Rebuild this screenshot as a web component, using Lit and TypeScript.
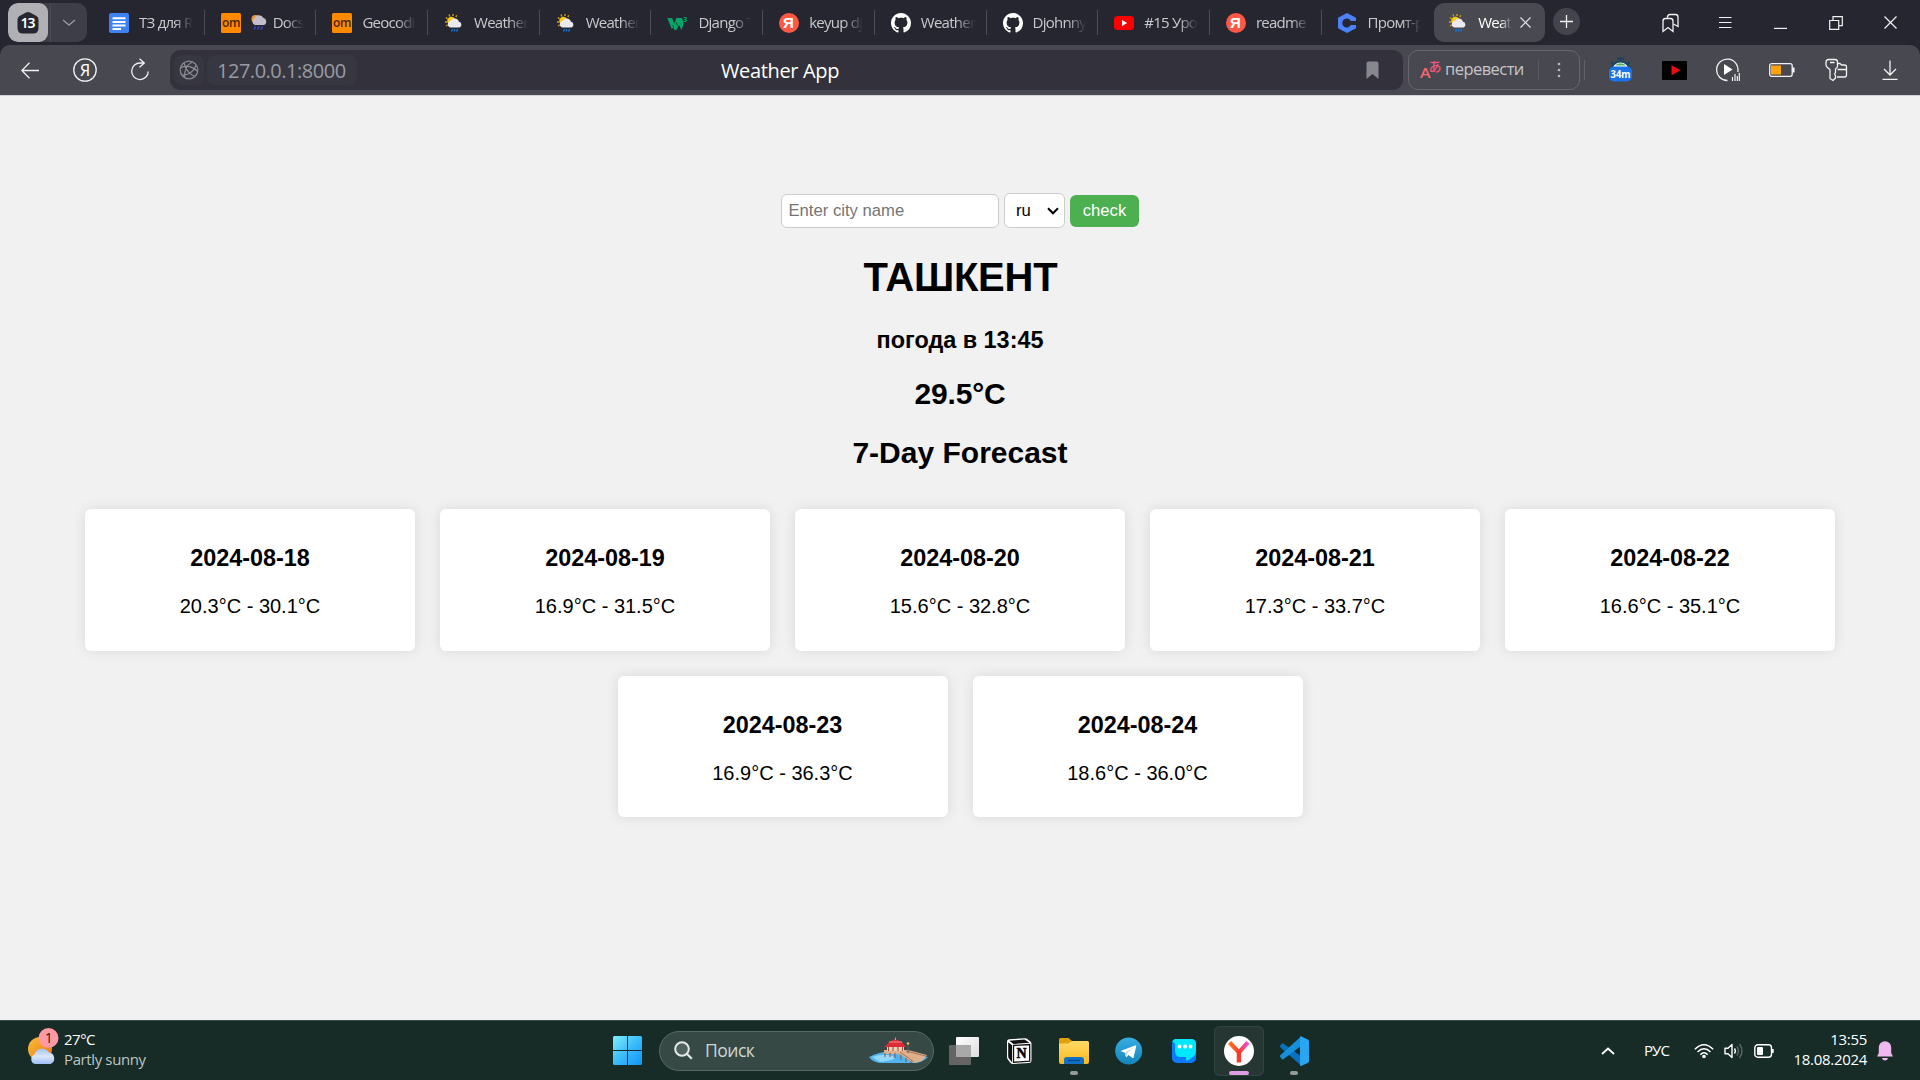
import { LitElement, html, css, svg, nothing } from "lit";
import { customElement } from "lit/decorators.js";

const icon = (w: number, h: number, body: unknown, cls = "") =>
  html`<svg class=${cls} width=${w} height=${h} viewBox="0 0 ${w} ${h}" fill="none">${body}</svg>`;

const GH =
  "M8 0C3.58 0 0 3.58 0 8c0 3.54 2.29 6.53 5.47 7.59.4.07.55-.17.55-.38 0-.19-.01-.82-.01-1.49-2.01.37-2.53-.49-2.69-.94-.09-.23-.48-.94-.82-1.13-.28-.15-.68-.52-.01-.53.63-.01 1.08.58 1.23.82.72 1.21 1.87.87 2.33.66.07-.52.28-.87.51-1.07-1.78-.2-3.64-.89-3.64-3.95 0-.87.31-1.59.82-2.15-.08-.2-.36-1.02.08-2.12 0 0 .67-.21 2.2.82.64-.18 1.32-.27 2-.27s1.36.09 2 .27c1.53-1.04 2.2-.82 2.2-.82.44 1.1.16 1.92.08 2.12.51.56.82 1.27.82 2.15 0 3.07-1.87 3.75-3.65 3.95.29.25.54.73.54 1.48 0 1.07-.01 1.93-.01 2.2 0 .21.15.46.55.38A8.01 8.01 0 0 0 16 8c0-4.42-3.58-8-8-8z";

const favicons: Record<string, () => unknown> = {
  docs: () =>
    icon(20, 20, svg`<rect width="20" height="20" rx="2" fill="#3f82f6"/>
      <path d="M3.5 5.2h13M3.5 9h13M3.5 12.5h13M3.5 16h8.5" stroke="#fff" stroke-width="2"/>`),
  om: () =>
    icon(20, 20, svg`<rect width="20" height="20" rx="1.5" fill="#ff8a00"/>
      <text x="10" y="13.500" text-anchor="middle" class="om">om</text>`),
  weather: () =>
    icon(20, 20, svg`<g stroke="#d9a514" stroke-width="1.3"><path d="M1 9h2M1.8 4.5l1.8 1.2M5 1.6l.8 1.8M9 1v2M12.8 2.4l-1 1.5M2 13l1.6-1"/></g>
      <circle cx="7.4" cy="8" r="4.2" fill="#fcc913"/>
      <path d="M6 14.5a3.3 3.3 0 0 1 .4-6.4A4.6 4.6 0 0 1 15 8.8a3 3 0 0 1 .6 5.7z" fill="#e9e9ef"/>
      <path d="M8.5 16l-.9 2.4M11 16l-.9 2.4M13.5 16l-.9 2.4" stroke="#1977d2" stroke-width="1.4"/>`),
  w3: () =>
    icon(21, 20, svg`<path d="M.3 5H5L7.300 10.500 9.300 5H15L16.300 8V12L14.500 17 12 12 9.500 17H7.500L6 14 5.500 15.500H4.500z" fill="#04a567"/>
      <path d="M9.200 9.500L10.500 12.500M5.800 12.200L6.500 14" stroke="#25262f" stroke-width=".8"/>
      <text x="16" y="9" class="three">3</text>`),
  ya: () =>
    icon(20, 20, svg`<circle cx="10" cy="10" r="10" fill="#fc5843"/>
      <text x="9.500" y="15.300" text-anchor="middle" class="yaf">Я</text>`),
  gh: () => html`<svg width="20" height="20" viewBox="0 0 16 16"><path fill="#fff" d=${GH}></path></svg>`,
  yt: () =>
    icon(20, 20, svg`<rect y="3" width="20" height="14" rx="3.500" fill="#f00"/><path d="M8 7l5.200 3L8 13z" fill="#fff"/>`),
  c: () =>
    icon(20, 20, svg`<path d="M9 0l9 4.700v3.300h-5.200a4.500 4.500 0 1 0 0 4H18v3.300L9 20 0 15.300V4.700z" fill="#4b82fa"/>`),
};

interface Tab { fav: string; title: string; emoji?: boolean }

const tabs: Tab[] = [
  { fav: "docs", title: "ТЗ для R" },
  { fav: "om", title: "Docs", emoji: true },
  { fav: "om", title: "Geocodi" },
  { fav: "weather", title: "Weather" },
  { fav: "weather", title: "Weather" },
  { fav: "w3", title: "Django T" },
  { fav: "ya", title: "keyup dj" },
  { fav: "gh", title: "Weather" },
  { fav: "gh", title: "Djohnny" },
  { fav: "yt", title: "#15 Уро" },
  { fav: "ya", title: "readme" },
  { fav: "c", title: "Промт-р" },
];

const forecast = [
  ["2024-08-18", "20.3°C - 30.1°C"],
  ["2024-08-19", "16.9°C - 31.5°C"],
  ["2024-08-20", "15.6°C - 32.8°C"],
  ["2024-08-21", "17.3°C - 33.7°C"],
  ["2024-08-22", "16.6°C - 35.1°C"],
  ["2024-08-23", "16.9°C - 36.3°C"],
  ["2024-08-24", "18.6°C - 36.0°C"],
];

@customElement("browser-tabs")
class BrowserTabs extends LitElement {
  static styles = css`
    :host { display: flex; height: 45px; padding-left: 8px; background: #25262f; box-sizing: border-box;
      font-family: "Open Sans", "Noto Sans", sans-serif; font-size: 15px; color: #c9c9cd; }
    svg { display: block; flex: none; }
    .om { font: 600 12px "Open Sans", sans-serif; fill: #4a2408; letter-spacing: -0.500px; }
    .three { font: 700 7.500px "Open Sans", sans-serif; fill: #04a567; }
    .yaf { font: 700 15px "Liberation Sans", sans-serif; fill: #fff; }
    .home { display: flex; width: 79px; height: 39px; margin: 3px 6px 0 0; border-radius: 10px; background: #3e3e48; overflow: hidden; flex: none; }
    .count { width: 40px; background: #b1b1b5; border-radius: 9px; display: grid; place-items: center; }
    .num { font: 600 14px "Noto Sans", sans-serif; fill: #fff; }
    .drop { flex: 1; display: grid; place-items: center; border-left: 1px solid #4b4b54; margin-left: 2px; }
    .tab { width: 111.700px; height: 45px; box-sizing: border-box; display: flex; align-items: center; padding: 0 12px 0 16px; flex: none; }
    .sep { width: 1px; height: 25px; background: #4b4c55; margin: 10px 0 0 -1px; flex: none; }
    .title { margin: -1px 0 0 10px; height: 24px; line-height: 24px; flex: 1; width: 0; overflow: hidden; white-space: nowrap; letter-spacing: -0.750px;
      display: flex; align-items: center; gap: 5px;
      -webkit-mask-image: linear-gradient(90deg, #000 65%, transparent 100%); mask-image: linear-gradient(90deg, #000 65%, transparent 100%); }
    .active { width: 111px; height: 39px; margin: 3px 0 0 1px; border-radius: 10px; background: #494952; color: #fff; padding: 0 14px; }
    .active .title { margin-right: 3px; flex: none; width: 34px; }
    .active .title + svg { margin-left: 4px; }
    .plus { width: 27px; height: 27px; margin: 8px 0 0 8px; border-radius: 50%; background: #44444d; display: grid; place-items: center; flex: none; }
    .win { display: flex; margin-left: auto; padding-right: 2px; }
    .win > div { width: 55px; height: 45px; display: grid; place-items: center; }
  `;
  render() {
    return html`
      <div class="home">
        <div class="count">${icon(22, 24, svg`<path d="M9 1.500Q11 .4 13 1.500L19.500 5Q21.500 6.200 21.500 8.500V17Q21.500 22.500 16 22.500H6Q.5 22.500.5 17V8.500Q.5 6.200 2.500 5z" fill="#25262f"/>
          <text x="11" y="17" text-anchor="middle" textLength="15" class="num">13</text>`)}</div>
        <div class="drop">${icon(14, 8, svg`<path d="M1 1l6 5 6-5" stroke="#96969c" stroke-width="1.500"/>`)}</div>
      </div>
      ${tabs.map((t, i) => html`
        <div class="tab">${favicons[t.fav]()}
          <div class="title">${t.emoji
            ? icon(17, 17, svg`<circle cx="4.500" cy="5" r="4" fill="#f0993c"/><path d="M4 11a3.500 3.500 0 0 1-.5-6.500 4.800 4.800 0 0 1 8.800-.7A3.800 3.800 0 0 1 13 11z" fill="#c3bdcd"/><path d="M4.500 12.500l-1.500 3M8 12.500l-1.500 3M11.500 12.500l-1.500 3" stroke="#3d47c2" stroke-width="1.600"/>`)
            : nothing}<span>${t.title}</span></div>
        </div>${i < 11 ? html`<div class="sep"></div>` : nothing}`)}
      <div class="tab active">${favicons.weather()}<div class="title">Weat</div>
        ${icon(13, 13, svg`<path d="M1.500 1.500l10 10M11.500 1.500l-10 10" stroke="#e4e4e6" stroke-width="1.200"/>`)}</div>
      <div class="plus">${icon(13, 13, svg`<path d="M6.500 0v13M0 6.500h13" stroke="#f0f0f2" stroke-width="1.300"/>`)}</div>
      <div class="win">
        <div>${icon(17, 20, svg`<g stroke="#f2f2f4" stroke-width="1.300"><path d="M1 18.500V8Q1 5.500 3.500 5.500H8.500Q11 5.500 11 8V18.500L6 14.500z"/><path d="M5.500 5V4Q5.500 1.500 8 1.500H13.500Q16 1.500 16 4V13.500L11.500 11"/></g>`)}</div>
        <div>${icon(13, 13, svg`<path d="M0 1.500h12.500M0 6.500h12.500M0 11.500h12.500" stroke="#f2f2f4" stroke-width="1.200"/>`)}</div>
        <div>${icon(13, 13, svg`<path d="M0 12.400h13" stroke="#f2f2f4" stroke-width="1.200"/>`)}</div>
        <div>${icon(14, 14, svg`<path d="M.7 4.500h9v8.800h-9zM4 4.500V.7h9.300v9h-3.600" stroke="#f2f2f4" stroke-width="1.200"/>`)}</div>
        <div>${icon(13, 13, svg`<path d="M.5.5l12 12M12.500.5l-12 12" stroke="#f2f2f4" stroke-width="1.200"/>`)}</div>
      </div>`;
  }
}

@customElement("browser-toolbar")
class BrowserToolbar extends LitElement {
  static styles = css`
    :host { display: block; background: #25262f; font-family: "Open Sans", "Noto Sans", sans-serif; }
    svg { display: block; flex: none; }
    .bar { display: flex; height: 50px; box-sizing: border-box; padding: 5px 2px 5px 2px; background: #484851; border-radius: 10px 10px 0 0; }
    .slot { width: 55px; display: grid; place-items: center; flex: none; }
    .ext { width: 54px; }
    .address { width: 1233px; margin-left: 3px; height: 40px; background: #33323c; border-radius: 10px; display: grid; grid-template-columns: 551px 1fr auto; align-items: center; box-sizing: border-box; padding: 0 24px 0 5px; flex: none; }
    .left { display: flex; gap: 3px; margin-left: -1px; }
    .globe, .url { height: 30px; background: #363741; border-radius: 8px; }
    .globe { width: 30px; display: grid; place-items: center; }
    .url { width: 150px; box-sizing: border-box; padding-left: 10px; line-height: 31px; font-size: 20px; color: #9b9ba1; letter-spacing: -0.480px; }
    .page { font-size: 20px; line-height: 32px; padding-top: 1px; padding-left: -5px; margin-left: -5px; color: #fff; white-space: nowrap; letter-spacing: -0.350px; }
    .translate { display: flex; align-items: center; width: 172px; height: 40px; box-sizing: border-box; margin-left: 5px; border: 1px solid #66666f; border-radius: 10px; color: #c5c5c9; font-size: 16.500px; padding-left: 11px; letter-spacing: -0.550px; flex: none; }
    .word { margin: -4px 0 0 3px; width: 93px; white-space: nowrap; }
    .more { border-left: 1px solid #5a5a63; height: 20px; flex: 1; display: grid; place-items: center; }
    .line { width: 1px; height: 20px; background: #606069; margin: 10px 8px 0 4px; flex: none; }
    .ja { font: 500 13px "Noto Sans CJK JP", sans-serif; fill: #f5567c; }
    .la { font: 500 15px "Noto Sans", sans-serif; fill: #fb6a6f; }
    .min { font: 700 10.500px "Noto Sans", sans-serif; fill: #fff; }
    .yao { font: 400 16px "Noto Sans", sans-serif; fill: #fff; }
    .edge { height: 1px; background: #d4d4d6; }
  `;
  render() {
    const s = "#f2f2f4";
    return html`<div class="bar">
      <div class="slot">${icon(18, 18, svg`<path d="M.8 9.500H18M8.500 1.700L.8 9.500l7.700 7.700" stroke=${s} stroke-width="1.300"/>`)}</div>
      <div class="slot">${icon(24, 24, svg`<circle cx="12" cy="12" r="11.200" stroke=${s} stroke-width="1.300"/><text x="12" y="18" text-anchor="middle" class="yao">Я</text>`)}</div>
      <div class="slot">${icon(20, 24, svg`<path d="M18.300 13.500A8.300 8.300 0 1 1 10.500 5H14M9.500.7L14.300 5 9.500 9.300" stroke=${s} stroke-width="1.300"/>`)}</div>
      <div class="address">
        <div class="left">
          <div class="globe">${icon(20, 20, svg`<g stroke="#8b8b92" stroke-width="1.200"><circle cx="10" cy="10" r="8.800"/><path d="M13.500 2C8.500 4 5 10 5.500 17.500M1.500 8C7 4.500 14.500 6.500 18.500 11.500M5 2.800C6.500 9 10 14 16 16.500M3 15C9 15.500 15 11.500 17 5.500"/></g>`)}</div>
          <div class="url">127.0.0.1:8000</div>
        </div>
        <div class="page">Weather App</div>
        <div>${icon(13, 18, svg`<path d="M.5 18V2.500Q.5.5 2.500.5H10.500Q12.500.5 12.500 2.500V18L6.500 13z" fill="#87878e"/>`)}</div>
      </div>
      <div class="translate">
        ${icon(22, 22, svg`<text x="0" y="19" textLength="10" lengthAdjust="spacingAndGlyphs" class="la">A</text><text x="8.500" y="11.500" class="ja">あ</text>`)}
        <div class="word">перевести</div>
        <div class="more">${icon(4, 16, svg`<g fill="#b9b9be"><circle cx="2" cy="2" r="1.300"/><circle cx="2" cy="8" r="1.300"/><circle cx="2" cy="14" r="1.300"/></g>`)}</div>
      </div>
      <div class="line"></div>
      <div class="slot ext">${icon(25, 26, svg`<path d="M9 1.500h7M12.500 1v4M3 5l3 2.500M22 5l-3 2.500" stroke="#17455f" stroke-width="2"/><path d="M3 14a9.500 9.500 0 0 1 19 0z" fill="#fff" stroke="#17455f" stroke-width="2"/><path d="M7 8.500a8 8 0 0 1 11 0z" fill="#58ac63"/><rect x="1" y="9.500" width="23" height="15" rx="5" fill="#1a73e8"/><text x="12.500" y="20.800" text-anchor="middle" textLength="20" lengthAdjust="spacingAndGlyphs" class="min">34m</text>`)}</div>
      <div class="slot ext">${icon(25, 19, svg`<rect width="25" height="19" rx="1" fill="#000"/><path d="M9.500 4.300l9 5-9 5z" fill="#f00a12"/>`)}</div>
      <div class="slot ext">${icon(24, 24, svg`<path d="M11.500 22.500A10.700 10.700 0 1 1 21.800 14" stroke=${s} stroke-width="1.300"/><path d="M8 6l8.500 5.500L8 17z" fill="#fff"/><path d="M16.500 23v-4M19 23v-7M21.300 23v-5M23.300 23v-8" stroke="#fff" stroke-width="1.100"/>`)}</div>
      <div class="slot ext">${icon(26, 14, svg`<rect x=".7" y=".7" width="22.500" height="12.600" rx="2" stroke=${s} stroke-width="1.300"/><rect x="2" y="2.500" width="10" height="9" fill="#fda40c"/><path d="M24.500 4.500v5" stroke="#fff" stroke-width="2"/>`)}</div>
      <div class="slot ext">${icon(23, 24, svg`<g stroke=${s} stroke-width="1.300" stroke-linejoin="round"><path d="M3.500 1.500H10Q12.500 1.500 12.500 4V8Q12.500 9.500 10.500 11V14.500L9.500 16 10.500 17.500V20L8 22.500 5 20.500V11.500Q1 9 1 6.500V4Q1 1.500 3.500 1.500z"/><path d="M5 4.500h4.500M12.500 5.500h2.500L16.500 7H19.500Q21.500 7 21.500 9V17Q21.500 19 19.500 19H12M12.500 11.500h9"/></g>`)}</div>
      <div class="slot ext">${icon(16, 20, svg`<path d="M8 .5v14M2 9l6 6 6-6M.5 19.300h15" stroke=${s} stroke-width="1.300"/>`)}</div>
    </div><div class="edge"></div>`;
  }
}

@customElement("weather-page")
class WeatherPage extends LitElement {
  static styles = css`
    :host { display: flex; flex-direction: column; align-items: center; height: 924px; box-sizing: border-box; padding-top: 97px; background: #f1f1f1; color: #000;
      font-family: "Liberation Sans", Arial, sans-serif; font-size: 20px; }
    .form { display: flex; align-items: center; gap: 5px; height: 35px; font-size: 16.670px; }
    .field { width: 218px; height: 34px; margin-top: 1px; box-sizing: border-box; border: 1px solid #ccc; border-radius: 6px; background: #fff; padding: 0 6.500px; line-height: 31px; color: #757575; }
    .lang { width: 61px; height: 35px; box-sizing: border-box; border: 1px solid #ccc; border-radius: 6px; background: #fff; padding: 0 5px 0 11px; display: flex; align-items: center; justify-content: space-between; }
    .check { width: 69px; height: 32px; border-radius: 6px; background: #4caf50; color: #fff; line-height: 31px; text-align: center; }
    h1, h2, h3, p { margin: 0; }
    h1 { margin-top: 26px; font-size: 40px; line-height: 46px; letter-spacing: -0.200px; padding-left: 1px; }
    .when { margin-top: 27px; font-size: 23.400px; line-height: 27px; letter-spacing: 0; }
    .now { margin-top: 23px; font-size: 30px; line-height: 34px; letter-spacing: -0.200px; }
    .heading { margin-top: 25px; font-size: 30px; line-height: 34px; }
    .cards { display: flex; flex-wrap: wrap; justify-content: center; gap: 25px; width: 1780px; margin-top: 39px; }
    .card { width: 330px; height: 141.600px; box-sizing: border-box; padding-top: 36px; text-align: center; background: #fff; border-radius: 6px; box-shadow: 0 0 12.500px rgba(0, 0, 0, 0.1); }
    .date { font-size: 23.400px; line-height: 27px; }
    .temp { margin-top: 23px; line-height: 23px; }
  `;
  render() {
    return html`
      <div class="form">
        <div class="field">Enter city name</div>
        <div class="lang"><span>ru</span>${icon(12, 8, svg`<path d="M1 1.300l5 5 5-5" stroke="#000" stroke-width="2"/>`)}</div>
        <div class="check">check</div>
      </div>
      <h1>ТАШКЕНТ</h1>
      <h3 class="when">погода в 13:45</h3>
      <h2 class="now">29.5°C</h2>
      <h2 class="heading">7-Day Forecast</h2>
      <div class="cards">${forecast.map(([d, t]) => html`<div class="card"><h3 class="date">${d}</h3><p class="temp">${t}</p></div>`)}</div>`;
  }
}

@customElement("task-bar")
class TaskBar extends LitElement {
  static styles = css`
    :host { display: grid; grid-template-columns: 600px 1fr auto; height: 60px; box-sizing: border-box; border-top: 1px solid #3a4d49; background: #172b27; color: #fff;
      font-family: "Open Sans", "Noto Sans", sans-serif; font-size: 15px; line-height: 20px; }
    svg { display: block; flex: none; overflow: visible; }
    .weather { display: flex; align-items: flex-start; padding: 7px 0 0 28px; gap: 5px; }
    .lines { padding-top: 1px; letter-spacing: -0.500px; }
    .dim { color: #bcc6c3; letter-spacing: -0.380px; }
    .badge { font: 400 14px "Open Sans", sans-serif; fill: #1c1c1c; }
    .apps { display: flex; align-items: center; }
    .start { width: 55px; display: grid; place-items: center; }
    .search { display: flex; align-items: center; width: 275px; height: 40px; box-sizing: border-box; margin: 0 5px 0 4px; border: 1px solid #586965; border-radius: 20px; background: #364944; padding: 0 5px 0 14px; flex: none; }
    .hint { flex: 1; padding-left: 12px; font-size: 17.500px; letter-spacing: -0.500px; color: #cfd5d3; margin-top: -1px; }
    .app { width: 50px; height: 50px; margin-right: 5px; border-radius: 6px; display: flex; flex-direction: column; align-items: center; box-sizing: border-box; flex: none; }
    .art { height: 30px; margin-top: 10px; }
    .run { width: 8px; height: 4px; border-radius: 2px; background: #919c99; margin-top: 5px; }
    .on { background: #263733; box-shadow: inset 0 0 0 1px #33443f; }
    .on .run { width: 20px; background: #dc9de6; }
    .n { font: 700 14px "Liberation Serif", serif; fill: #000; stroke: #000; stroke-width: .5; }
    .tray { display: flex; align-items: center; padding-right: 27px; }
    .lang { margin: -1px 24px 0 29px; width: 26px; letter-spacing: -0.900px; }
    .status { display: flex; gap: 10px; align-items: center; width: 81px; }
    .clock { width: 92px; text-align: right; margin: -3px 10px 0 0; letter-spacing: -0.300px; white-space: nowrap; }
  `;
  app(art: unknown, run = false, on = false) {
    return html`<div class="app ${on ? "on" : ""}"><div class="art">${icon(30, 30, art)}</div>${run ? html`<div class="run"></div>` : nothing}</div>`;
  }
  render() {
    return html`
      <div class="weather">
        ${icon(31, 37, svg`<defs>
          <linearGradient id="sun" x1="0" y1="0" x2="1" y2="1"><stop stop-color="#f5c13a"/><stop offset="1" stop-color="#f3700c"/></linearGradient>
          <linearGradient id="cl" x1="0" y1="0" x2="0" y2="1"><stop stop-color="#a4c3f5"/><stop offset=".5" stop-color="#dbe7fb"/><stop offset="1" stop-color="#9dbdf3"/></linearGradient></defs>
          <circle cx="12" cy="21" r="12" fill="url(#sun)"/>
          <path d="M7 36a5 5 0 0 1-.5-9.500A8 8 0 0 1 21 24.500 6 6 0 0 1 22.500 36z" fill="url(#cl)"/>
          <circle cx="20.500" cy="10" r="10" fill="#ff99a4"/><text x="20.800" y="15" text-anchor="middle" class="badge">1</text>`)}
        <div class="lines"><div>27°C</div><div class="dim">Partly sunny</div></div>
      </div>
      <div class="apps">
        <div class="start">${icon(29, 29, svg`<defs><linearGradient id="w" x1="0" y1="0" x2="29" y2="29" gradientUnits="userSpaceOnUse"><stop stop-color="#7df0ff"/><stop offset=".5" stop-color="#3cbcf8"/><stop offset="1" stop-color="#0f94f8"/></linearGradient></defs>
          <path d="M1 0h13v14H0V1zM15 0h13l1 1v13H15zM0 15h14v14H1l-1-1zM15 15h14v13l-1 1H15z" fill="url(#w)"/>`)}</div>
        <div class="search">
          ${icon(19, 19, svg`<circle cx="8" cy="8" r="6.800" fill="#51625e" stroke="#e5e9e8" stroke-width="2"/><path d="M12.800 12.800l5 5" stroke="#e5e9e8" stroke-width="2.300"/>`)}
          <div class="hint">Поиск</div>
          ${icon(60, 27, svg`<path d="M1 20Q16 12 34 15L60 20Q54 26 46 26H15Q5 26 1 20z" fill="#4eb5f1"/><path d="M4 20Q12 17 21 18Q30 20 24 23L12 25z" fill="#93d8fb"/>
            <path d="M16 13h24l19 5-5 6-8 2L31 17H16z" fill="#dcb08a"/><path d="M17 16v4M22 16v4M27 16v5M33 18v5M38 21v4M43 24v2" stroke="#93533f" stroke-width="1"/><path d="M32 15l14 10M38 14l20 5" stroke="#9c6049" stroke-width=".8"/>
            <path d="M19 9h17v5H19z" fill="#e9d0b5"/><path d="M20.500 9v5M25 9v5M30 9v5M34.500 9v5" stroke="#a44336" stroke-width="1"/><path d="M16.500 10l4.500-5 6-3 7 3 4 5z" fill="#dd2c39"/><path d="M21 5h13M27.500.5V3" stroke="#f48c83" stroke-width="1"/><path d="M40 16V6" stroke="#655d56"/><circle cx="40" cy="6.500" r="1.300" fill="#e1c26a"/>`)}
        </div>
        ${this.app(svg`<defs><linearGradient id="tv" x1="0" y1="0" x2="1" y2="1"><stop stop-color="#fff"/><stop offset="1" stop-color="#ddd"/></linearGradient></defs><rect y="9" width="22" height="20" rx="1" fill="#646464"/><rect x="7" y="1" width="23" height="20" rx="1" fill="url(#tv)"/><path d="M7 9h15v12H7z" fill="#a9a9a9"/>`)}
        ${this.app(svg`<path d="M3 5.500Q3 3.500 5 3.300L20.500 2.200Q22 2 23 2.800L26.500 5.500Q27.500 6.300 27.500 8V24.500Q27.500 26.700 25.500 27L9 28Q7.500 28 6.500 27L4 23.800Q3 22.500 3 21z" fill="#fff"/><path d="M4.200 6.200L8 9.200V26.200L5 22.500Q4.200 21.500 4.200 20zM5.300 4.700L20.500 3.500 25.500 6.800 9.500 8z" fill="#111"/><path d="M9.500 9.500L25.700 8.500V25.200L9.500 26.300z" fill="#fff" stroke="#111" stroke-width="1.300"/><text x="17.500" y="22" text-anchor="middle" class="n">N</text>`)}
        ${this.app(svg`<defs><linearGradient id="fo" x1="0" y1="0" x2="0" y2="1"><stop stop-color="#ffd968"/><stop offset="1" stop-color="#fbb91c"/></linearGradient></defs><path d="M0 3.500Q0 2 1.500 2H9.500L13 5 10 10H0z" fill="#e2a10c"/><path d="M0 7.500H9L13 5H28.500Q30 5 30 6.500V26Q30 28 28 28H2Q0 28 0 26z" fill="url(#fo)"/><path d="M5 28V24Q5 21 8 21H22Q25 21 25 24V28z" fill="#0f70c5"/><path d="M9 24.500H21" stroke="#084e92" stroke-width="1.500"/>`, true)}
        ${this.app(svg`<defs><linearGradient id="tg" x1="0" y1="0" x2="0" y2="1"><stop stop-color="#37aee2"/><stop offset="1" stop-color="#1583bd"/></linearGradient></defs><circle cx="14.700" cy="15" r="13.500" fill="url(#tg)"/><path d="M6.500 15L21.500 9.200Q22.500 9 22.200 10.200L19.600 21.500Q19.300 22.500 18.300 21.800L14.500 19 12.600 21Q12 21.500 11.800 20.500L10.800 16.700z" fill="#fff"/><path d="M11 16.700L18.500 12 12.700 17.700 12.400 20.500z" fill="#b6d5e8"/>`)}
        ${this.app(svg`<rect x="3" y="3" width="24" height="24" rx="5" fill="#0a7aff"/><path d="M6 3H22Q27 3 27 8V15Q27 20.500 17.500 25 17 23 17 21H12Q6 21 6 15V9Q6 6 3 6Q4 3.500 6 3z" fill="#00e8fb"/><g fill="#fff"><circle cx="10.500" cy="10.500" r="1.900"/><circle cx="16" cy="10.500" r="1.900"/><circle cx="21.500" cy="10.500" r="1.900"/></g>`)}
        ${this.app(svg`<defs><linearGradient id="yb" x1="7" y1="0" x2="24" y2="0" gradientUnits="userSpaceOnUse"><stop stop-color="#ff6b1a"/><stop offset=".5" stop-color="#fb3f36"/><stop offset="1" stop-color="#f64be0"/></linearGradient></defs><circle cx="15" cy="15" r="15" fill="#fff"/><path d="M7 8l8 8.500 7.500-8.500" stroke="url(#yb)" stroke-width="4.200" stroke-linecap="square"/><path d="M14.900 15v11.500" stroke="#fb3a2d" stroke-width="4.400"/>`, true, true)}
        ${this.app(svg`<path d="M1.500 9.200Q.2 10.300 1.500 11.400L22 29.500 24 21.500 4.300 7.500Q3.500 7 2.800 7.700z" fill="#0871bd"/><path d="M1.500 21.300Q.2 20.200 1.500 19L22 .5 24 8.500 4.300 23.300Q3.500 23.800 2.800 23z" fill="#1590dc"/><path d="M22 .3L28.800 3.500Q30 4 30 5.500V25Q30 26.500 28.800 27L22 30Q21 30.200 21 29V1.500Q21 0 22 .3z" fill="#29a5f2"/>`, true)}
      </div>
      <div class="tray">
        ${icon(14, 8, svg`<path d="M1 7l6-5.500L13 7" stroke="#fff" stroke-width="1.900"/>`)}
        <div class="lang">РУС</div>
        <div class="status">
          ${icon(20, 16, svg`<path d="M.8 6.300Q10-3 19.200 6.300M3.500 9Q10 2.500 16.500 9M6.300 11.700Q10 8 13.700 11.700" stroke="#fff" stroke-width="1.500"/><circle cx="10" cy="13.500" r="1.800" fill="#fff"/>`)}
          ${icon(20, 16, svg`<path d="M1 5.300H4L8 1.500V14.500L4 10.700H1z" stroke="#fff" stroke-width="1.400" stroke-linejoin="round"/><path d="M10.500 5.500Q12.300 8 10.500 10.500" stroke="#fff" stroke-width="1.400"/><path d="M13 3.500Q16 8 13 12.500M15.500 1Q20.500 8 15.500 15" stroke="#5a6965" stroke-width="1.400"/>`)}
          ${icon(21, 14, svg`<rect x=".8" y=".8" width="16.700" height="12.400" rx="3" stroke="#fff" stroke-width="1.400"/><rect x="3" y="3" width="6" height="8" rx="1" fill="#fff"/><path d="M18.500 5v4" stroke="#fff" stroke-width="2.400"/>`)}
        </div>
        <div class="clock"><div>13:55</div><div>18.08.2024</div></div>
        ${icon(16, 20, svg`<path d="M0 15.500L1.800 12V6.500a6.200 6.200 0 0 1 12.400 0V12L16 15.500zM5 17h6Q10.500 19.500 8 19.500T5 17z" fill="#efb9ef"/>`)}
      </div>`;
  }
}

@customElement("app-root")
class AppRoot extends LitElement {
  static styles = css`
    :host { display: block; width: 1920px; height: 1080px; overflow: hidden; background: #f1f1f1; }
  `;
  render() {
    return html`<browser-tabs></browser-tabs><browser-toolbar></browser-toolbar><weather-page></weather-page><task-bar></task-bar>`;
  }
}
